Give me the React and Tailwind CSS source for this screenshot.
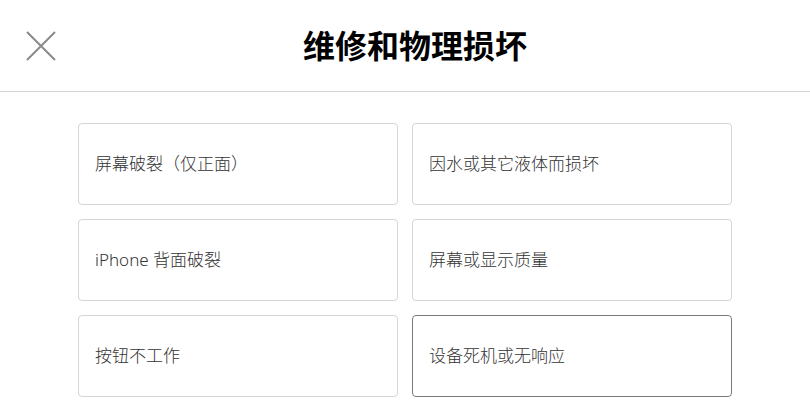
const items = [
  '屏幕破裂（仅正面）',
  '因水或其它液体而损坏',
  'iPhone 背面破裂',
  '屏幕或显示质量',
  '按钮不工作',
  '设备死机或无响应',
]

export default function App() {
  return (
    <div
      className="min-h-screen bg-white"
      style={{ fontFamily: '"Noto Sans", "Noto Sans CJK SC", sans-serif' }}
    >
      {/* Header */}
      <header className="relative h-[92px] border-b border-[#d2d2d2] flex items-center justify-center">
        <button className="absolute left-[26px] top-[31px] text-[#8a8a8a]">
          <svg width="30" height="30" viewBox="0 0 30 30" fill="none" stroke="currentColor" strokeWidth="2">
            <path d="M1 1L29 29M29 1L1 29" />
          </svg>
        </button>
        <h1 className="pl-[20px] text-[32px] font-bold text-black leading-none">维修和物理损坏</h1>
      </header>

      {/* Options */}
      <div className="w-[654px] mx-auto pt-[31px] grid grid-cols-2 gap-[14px]">
        {items.map((label, i) => (
          <button
            key={label}
            className={`h-[82px] rounded-[4px] border bg-white text-left px-[16px] text-[17px] font-light text-[#333] ${
              i === 5 ? 'border-[#7a7a7a]' : 'border-[#d6d6d6]'
            }`}
          >
            {label}
          </button>
        ))}
      </div>
    </div>
  )
}
